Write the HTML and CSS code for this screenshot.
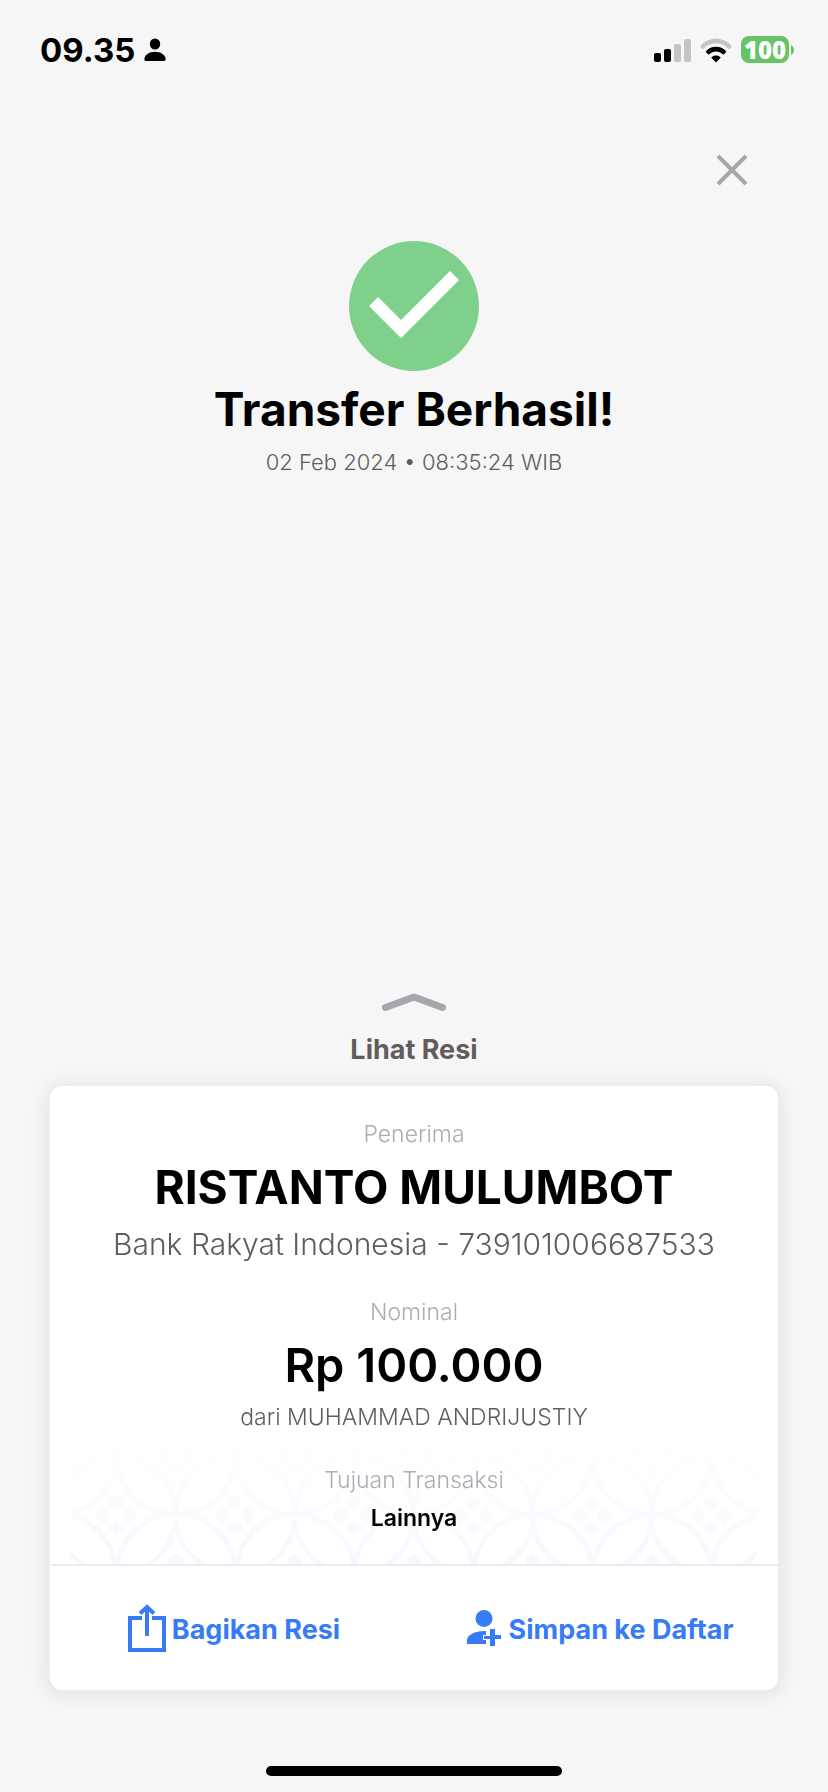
FILE: index.html
```html
<!DOCTYPE html>
<html lang="id">
<head>
<meta charset="utf-8">
<meta name="viewport" content="width=device-width, initial-scale=1">
<title>Transfer Berhasil</title>
<link rel="stylesheet" href="styles.css">
</head>
<body>
<div class="screen">
  <header class="status-bar">
    <div class="status-left">
      <span class="clock">09.35</span>
      <svg class="person" viewBox="0 0 22 24" aria-hidden="true"><ellipse cx="11" cy="6" rx="5.2" ry="5.6"/><path d="M2 23C.6 23 .3 22 .4 20.600 1 16.500 5.500 13.700 11 13.700s10 2.800 10.600 6.900c.1 1.400-.2 2.400-1.600 2.400z"/></svg>
    </div>
    <div class="status-right">
      <svg class="signal" viewBox="0 0 37 24" aria-hidden="true"><rect x="0" y="15" width="7" height="9" rx="2"/><rect x="10" y="11" width="7" height="13" rx="2"/><rect class="dim" x="20" y="6" width="7" height="18" rx="2"/><rect class="dim" x="30" y="1" width="7" height="23" rx="2"/></svg>
      <svg class="wifi" viewBox="0 0 32 24" aria-hidden="true"><path class="dim" d="M.5 7.700C4.500 3.200 10 .7 16 .7s11.500 2.500 15.500 7c.3.400.3.800 0 1.100l-1.900 1.900c-.4.400-.8.400-1.200 0C25.200 7.300 20.800 5.300 16 5.300S6.800 7.300 3.600 10.700c-.4.400-.8.400-1.200 0L.5 8.800c-.3-.3-.3-.7 0-1.100z"/><path d="M6 13.200c2.600-2.900 6-4.400 10-4.400s7.400 1.500 10 4.400c.3.300.3.700 0 1l-2.100 2.100c-.3.300-.7.300-1.100 0-1.900-1.900-4-2.900-6.800-2.900s-4.900 1-6.800 2.900c-.4.300-.8.300-1.100 0L6 14.200c-.3-.3-.3-.7 0-1z"/><path d="M11.600 19.200c1.200-1.200 2.700-1.800 4.400-1.800s3.200.6 4.400 1.800c.3.300.3.600 0 .9l-3.700 3.600c-.5.400-.9.400-1.400 0l-3.700-3.600c-.3-.3-.3-.6 0-.9z"/></svg>
      <div class="battery"><span class="battery-level">100</span><svg class="battery-tip" viewBox="0 0 3 10" aria-hidden="true"><path d="M0 0c2 1 3 3 3 5s-1 4-3 5z"/></svg></div>
    </div>
  </header>

  <div class="toolbar">
    <button class="close" type="button" aria-label="Tutup"><svg viewBox="0 0 32 32" aria-hidden="true"><path d="M2 2l28 28M30 2L2 30"/></svg></button>
  </div>

  <main class="content">
    <section class="result">
      <svg class="check" viewBox="0 0 130 130" aria-hidden="true"><circle cx="65" cy="65" r="65"/><path d="M20 65l9-9 23 23 49-49 9 9-58 58z"/></svg>
      <h1 class="title">Transfer Berhasil!</h1>
      <p class="note date">02 Feb 2024 • 08:35:24 WIB</p>
    </section>

    <button class="see-receipt" type="button">
      <svg class="chevron" viewBox="0 0 64 20" aria-hidden="true"><path d="M3.500 15.500L32 5l28.500 10.500"/></svg>
      <span>Lihat Resi</span>
    </button>

    <article class="card">
      <div class="details">
        <svg class="batik" viewBox="0 0 686 124" preserveAspectRatio="xMidYMax slice" aria-hidden="true">
          <defs>
            <g id="motif">
              <circle class="ring" r="59.500"/>
              <rect x="-6" y="-6" width="12" height="12" rx="2" transform="translate(0 -13) rotate(45)"/>
              <rect x="-6" y="-6" width="12" height="12" rx="2" transform="translate(0 13) rotate(45)"/>
              <rect x="-6" y="-6" width="12" height="12" rx="2" transform="translate(-13 0) rotate(45)"/>
              <rect x="-6" y="-6" width="12" height="12" rx="2" transform="translate(13 0) rotate(45)"/>
            </g>
            <g id="row">
              <use href="#motif" x="-74"/><use href="#motif" x="45"/><use href="#motif" x="164"/><use href="#motif" x="283"/><use href="#motif" x="402"/><use href="#motif" x="521"/><use href="#motif" x="640"/><use href="#motif" x="759"/>
            </g>
            <linearGradient id="fade" x1="0" y1="0" x2="0" y2="124" gradientUnits="userSpaceOnUse">
              <stop offset="0" stop-color="#fff" stop-opacity="0"/><stop offset=".5" stop-color="#fff" stop-opacity=".5"/><stop offset="1" stop-color="#fff"/>
            </linearGradient>
            <mask id="veil" maskUnits="userSpaceOnUse" x="0" y="0" width="686" height="124"><rect width="686" height="124" fill="url(#fade)"/></mask>
          </defs>
          <g mask="url(#veil)"><use href="#row" x="60" y="15"/><use href="#row" y="75"/><use href="#row" x="60" y="134"/></g>
        </svg>
        <dl class="fields">
          <div class="field">
            <dt class="label">Penerima</dt>
            <dd class="value">RISTANTO MULUMBOT</dd>
            <dd class="bank">Bank Rakyat Indonesia - 739101006687533</dd>
          </div>
          <div class="field">
            <dt class="label">Nominal</dt>
            <dd class="value amount">Rp 100.000</dd>
            <dd class="note">dari MUHAMMAD ANDRIJUSTIY</dd>
          </div>
          <div class="field">
            <dt class="label">Tujuan Transaksi</dt>
            <dd class="purpose">Lainnya</dd>
          </div>
        </dl>
      </div>
      <div class="actions">
        <button class="action share-action" type="button">
          <svg class="share" viewBox="0 0 38 48" aria-hidden="true"><path class="line" d="M14 14H2v32h34V14H24"/><path class="line" d="M19 32V4M12 9.500l7-6.500 7 6.500"/></svg>
          <span class="action-text">Bagikan Resi</span>
        </button>
        <button class="action save" type="button">
          <svg class="add-person" viewBox="0 0 34 36" aria-hidden="true"><circle cx="17" cy="8.500" r="8.500"/><path d="M0 34v-4c0-5 8-9 17-9h2v4h-3v5h3v4z"/><path d="M23 19h5v6h6v4h-6v7h-5v-7h-6v-3h6z"/></svg>
          <span class="action-text">Simpan ke Daftar</span>
        </button>
      </div>
    </article>
  </main>
  <div class="home-indicator"></div>
</div>
</body>
</html>
```
FILE: styles.css
```css
* {
  box-sizing: border-box;
}

body {
  margin: 0;
  background: #f6f6f6;
  color: #000;
  font-family: "Inter", "Liberation Sans", sans-serif;
}

h1, p, dl, dd {
  margin: 0;
}

button {
  padding: 0;
  border: 0;
  background: none;
  color: inherit;
  font: inherit;
  cursor: pointer;
}

svg {
  display: block;
  flex: none;
}

.screen {
  display: flex;
  flex-direction: column;
  min-height: 100vh;
}

.status-bar {
  display: flex;
  justify-content: space-between;
  align-items: center;
  padding: 29px 34px 0 40px;
  height: 70px;
}

.status-left,
.status-right {
  display: flex;
  align-items: center;
  gap: 9px;
}

.clock {
  font-size: 33px;
  line-height: 40px;
  font-weight: 700;
}

.person {
  width: 22px;
  height: 24px;
}

.signal {
  width: 37px;
  height: 24px;
}

.wifi {
  width: 32px;
  height: 24px;
}

.dim {
  fill: #c4c4c4;
}

.battery {
  display: flex;
  align-items: center;
  gap: 2px;
}

.battery-level {
  width: 48px;
  border-radius: 8px;
  background: #65c466;
  color: #fff;
  font-family: "Open Sans", sans-serif;
  font-size: 24px;
  line-height: 27px;
  font-weight: 800;
  text-align: center;
}

.battery-tip {
  width: 3px;
  height: 10px;
  fill: #65c466;
}

.toolbar {
  display: flex;
  justify-content: flex-end;
  padding: 84px 80px 0;
}

.close svg {
  width: 32px;
  height: 32px;
  fill: none;
  stroke: #a9a6ab;
  stroke-width: 4;
}

.content {
  display: flex;
  flex: 1;
  flex-direction: column;
  align-items: center;
  padding: 55px 48px 0;
}

.result {
  display: flex;
  flex-direction: column;
  align-items: center;
  margin-bottom: auto;
  text-align: center;
}

.check {
  width: 130px;
  height: 130px;
  fill: #7fd08b;
}

.check path {
  fill: #fff;
}

.title {
  margin: 10px 0;
  font-size: 46px;
  line-height: 56px;
  font-weight: 700;
}

.note {
  color: #625c5d;
  font-size: 23px;
  line-height: 30px;
  font-weight: 300;
}

.date {
  font-size: 22px;
}

.see-receipt {
  display: flex;
  flex-direction: column;
  align-items: center;
  gap: 20px;
  margin-bottom: 16px;
  color: #625c5d;
  font-size: 27px;
  line-height: 36px;
  font-weight: 700;
}

.chevron {
  width: 64px;
  height: 20px;
  fill: none;
  stroke: #aaa4ac;
  stroke-width: 7;
  stroke-linecap: round;
  stroke-linejoin: round;
}

.card {
  width: 100%;
  border: 2px solid #ececec;
  border-radius: 14px;
  background: #fff;
  background-clip: padding-box;
  box-shadow: 0 2px 20px rgba(0, 0, 0, 0.09);
}

.details {
  position: relative;
  border-bottom: 2px solid #ececec;
}

.batik {
  position: absolute;
  right: 21px;
  bottom: 0;
  left: 21px;
  width: calc(100% - 42px);
  height: 124px;
  fill: #f5f8ff;
}

.ring {
  fill: none;
  stroke: #f5f8ff;
  stroke-width: 5;
}

.fields {
  position: relative;
  display: flex;
  flex-direction: column;
  gap: 32px;
  padding: 32px 16px 30px;
  text-align: center;
}

.label {
  color: #b0abb2;
  font-size: 23px;
  line-height: 32px;
  font-weight: 300;
}

.value {
  margin: 9px 0;
  font-size: 46px;
  line-height: 56px;
  font-weight: 700;
}

.amount {
  font-size: 47px;
  font-weight: 600;
}

.bank {
  color: #625c5d;
  font-size: 30px;
  line-height: 40px;
  font-weight: 300;
}

.purpose {
  margin-top: 6px;
  font-size: 23px;
  line-height: 32px;
  font-weight: 600;
}

.actions {
  display: grid;
  grid-template-columns: 1fr 1fr;
  height: 124px;
}

.action {
  display: flex;
  justify-content: center;
  align-items: center;
  gap: 8px;
  color: #387bf7;
  fill: #387bf7;
  font-size: 27px;
  line-height: 36px;
  font-weight: 700;
}

.action-text {
  padding-top: 4px;
}

.share-action {
  gap: 6px;
  padding-left: 4px;
}

.save {
  padding-left: 8px;
}

.share {
  width: 38px;
  height: 48px;
}

.line {
  fill: none;
  stroke: #387bf7;
  stroke-width: 4;
}

.add-person {
  width: 34px;
  height: 36px;
}

.home-indicator {
  align-self: center;
  width: 296px;
  height: 10px;
  margin: 74px 0 16px;
  border-radius: 5px;
  background: #000;
}
```
